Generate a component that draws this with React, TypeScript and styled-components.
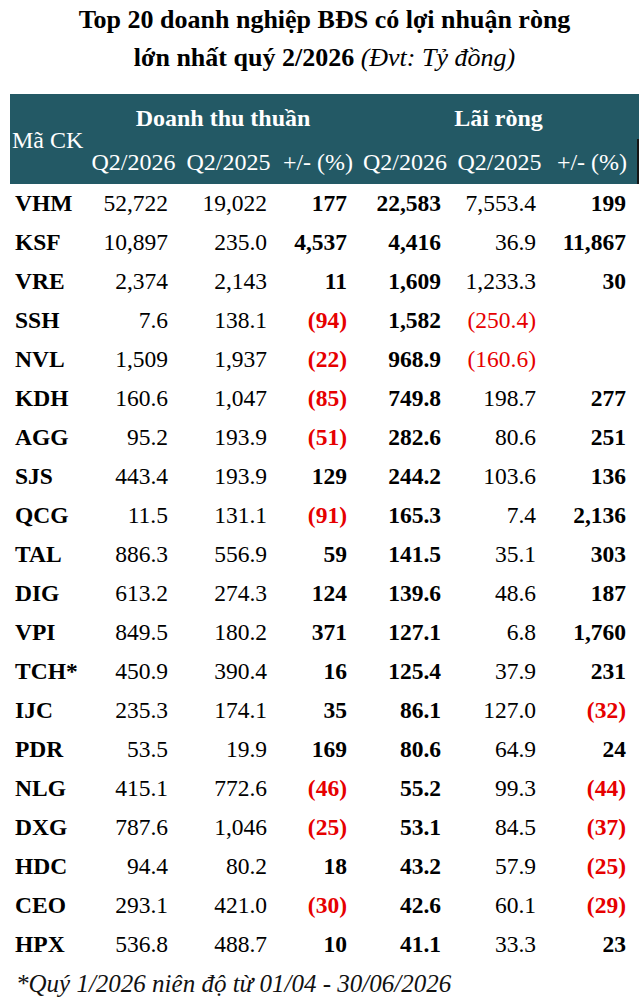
import styled, { createGlobalStyle } from 'styled-components';

const GlobalStyle = createGlobalStyle`
  html, body {
    margin: 0;
    padding: 0;
    background: #ffffff;
  }
  body {
    font-family: 'Liberation Serif', 'Times New Roman', serif;
    color: #000;
  }
`;

const COLUMNS = '78px 91px 99px 80px 94px 95px 1fr';

const Sheet = styled.div`
  width: 629px;
  padding: 1px 0 0 10px;
`;

const Title = styled.h1`
  margin: 0 0 17px;
  font-size: 26px;
  line-height: 38px;
  font-weight: bold;
  text-align: center;
`;

const Unit = styled.span`
  font-weight: normal;
  font-style: italic;
`;

const Header = styled.div`
  display: grid;
  grid-template-columns: ${COLUMNS};
  grid-template-rows: 45px 45px;
  background: #235965;
  color: #fff;
`;

const CodeHead = styled.div`
  grid-row: 1 / 3;
  grid-column: 1;
  display: flex;
  align-items: center;
  padding: 2px 0 0 2px;
  font-size: 24px;
`;

const GroupHead = styled.div<{ $col: string }>`
  grid-row: 1;
  grid-column: ${(p) => p.$col};
  padding-top: 12px;
  font-size: 24px;
  line-height: 24px;
  font-weight: bold;
  text-align: center;
`;

const SubHead = styled.div<{ $edge?: boolean }>`
  grid-row: 2;
  padding-top: 11px;
  font-size: 24px;
  line-height: 24px;
  text-align: center;
  white-space: nowrap;
  border-right: ${(p) => (p.$edge ? '2px solid #161616' : 'none')};
`;

const Row = styled.div`
  display: grid;
  grid-template-columns: ${COLUMNS};
  height: 39px;
  font-size: 23.5px;
  line-height: 39px;
`;

const Code = styled.div`
  padding-left: 5px;
  font-weight: bold;
`;

const Cell = styled.div<{ $bold?: boolean; $neg?: boolean }>`
  text-align: right;
  padding-right: 11px;
  white-space: nowrap;
  font-weight: ${(p) => (p.$bold ? 'bold' : 'normal')};
  color: ${(p) => (p.$neg ? '#e60000' : '#000')};

  &:last-child {
    padding-right: 13px;
  }
`;

const Footnote = styled.div`
  padding-left: 6px;
  font-size: 25px;
  line-height: 39px;
  font-style: italic;
  color: #111;
`;

const rows: string[][] = [
  ['VHM', '52,722', '19,022', '177', '22,583', '7,553.4', '199'],
  ['KSF', '10,897', '235.0', '4,537', '4,416', '36.9', '11,867'],
  ['VRE', '2,374', '2,143', '11', '1,609', '1,233.3', '30'],
  ['SSH', '7.6', '138.1', '(94)', '1,582', '(250.4)', ''],
  ['NVL', '1,509', '1,937', '(22)', '968.9', '(160.6)', ''],
  ['KDH', '160.6', '1,047', '(85)', '749.8', '198.7', '277'],
  ['AGG', '95.2', '193.9', '(51)', '282.6', '80.6', '251'],
  ['SJS', '443.4', '193.9', '129', '244.2', '103.6', '136'],
  ['QCG', '11.5', '131.1', '(91)', '165.3', '7.4', '2,136'],
  ['TAL', '886.3', '556.9', '59', '141.5', '35.1', '303'],
  ['DIG', '613.2', '274.3', '124', '139.6', '48.6', '187'],
  ['VPI', '849.5', '180.2', '371', '127.1', '6.8', '1,760'],
  ['TCH*', '450.9', '390.4', '16', '125.4', '37.9', '231'],
  ['IJC', '235.3', '174.1', '35', '86.1', '127.0', '(32)'],
  ['PDR', '53.5', '19.9', '169', '80.6', '64.9', '24'],
  ['NLG', '415.1', '772.6', '(46)', '55.2', '99.3', '(44)'],
  ['DXG', '787.6', '1,046', '(25)', '53.1', '84.5', '(37)'],
  ['HDC', '94.4', '80.2', '18', '43.2', '57.9', '(25)'],
  ['CEO', '293.1', '421.0', '(30)', '42.6', '60.1', '(29)'],
  ['HPX', '536.8', '488.7', '10', '41.1', '33.3', '23'],
];

// cột in đậm: +/- doanh thu, lãi ròng Q2/2026, +/- lãi ròng
const boldCols = [3, 4, 6];
const subHeads = ['Q2/2026', 'Q2/2025', '+/- (%)', 'Q2/2026', 'Q2/2025', '+/- (%)'];

export default function App() {
  return (
    <Sheet>
      <GlobalStyle />
      <Title>
        Top 20 doanh nghiệp BĐS có lợi nhuận ròng
        <br />
        lớn nhất quý 2/2026 <Unit>(Đvt: Tỷ đồng)</Unit>
      </Title>

      <Header>
        <CodeHead>Mã CK</CodeHead>
        <GroupHead $col="2 / 5">Doanh thu thuần</GroupHead>
        <GroupHead $col="5 / 8">Lãi ròng</GroupHead>
        {subHeads.map((label, i) => (
          <SubHead key={i} $edge={i === subHeads.length - 1}>
            {label}
          </SubHead>
        ))}
      </Header>

      {rows.map(([code, ...values]) => (
        <Row key={code}>
          <Code>{code}</Code>
          {values.map((v, i) => (
            <Cell key={i} $bold={boldCols.includes(i + 1)} $neg={v.startsWith('(')}>
              {v}
            </Cell>
          ))}
        </Row>
      ))}

      <Footnote>*Quý 1/2026 niên độ từ 01/04 - 30/06/2026</Footnote>
    </Sheet>
  );
}
